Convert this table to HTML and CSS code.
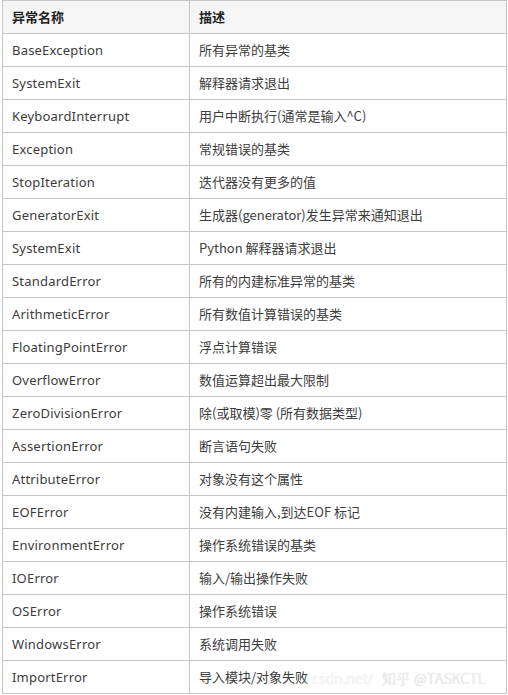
FILE: index.html
```html
<!DOCTYPE html>
<html lang="zh-CN">
<head>
<meta charset="utf-8">
<link rel="stylesheet" href="styles.css">
</head>
<body>
<div class="wrap">
<table class="err-table">
<thead>
<tr><th class="c1">异常名称</th><th class="c2">描述</th></tr>
</thead>
<tbody>
<tr><td>BaseException</td><td>所有异常的基类</td></tr>
<tr><td>SystemExit</td><td>解释器请求退出</td></tr>
<tr><td>KeyboardInterrupt</td><td>用户中断执行(通常是输入^C)</td></tr>
<tr><td>Exception</td><td>常规错误的基类</td></tr>
<tr><td>StopIteration</td><td>迭代器没有更多的值</td></tr>
<tr><td>GeneratorExit</td><td>生成器(generator)发生异常来通知退出</td></tr>
<tr><td>SystemExit</td><td>Python 解释器请求退出</td></tr>
<tr><td>StandardError</td><td>所有的内建标准异常的基类</td></tr>
<tr><td>ArithmeticError</td><td>所有数值计算错误的基类</td></tr>
<tr><td>FloatingPointError</td><td>浮点计算错误</td></tr>
<tr><td>OverflowError</td><td>数值运算超出最大限制</td></tr>
<tr><td>ZeroDivisionError</td><td>除(或取模)零 (所有数据类型)</td></tr>
<tr><td>AssertionError</td><td>断言语句失败</td></tr>
<tr><td>AttributeError</td><td>对象没有这个属性</td></tr>
<tr><td>EOFError</td><td>没有内建输入,到达EOF 标记</td></tr>
<tr><td>EnvironmentError</td><td>操作系统错误的基类</td></tr>
<tr><td>IOError</td><td>输入/输出操作失败</td></tr>
<tr><td>OSError</td><td>操作系统错误</td></tr>
<tr><td>WindowsError</td><td>系统调用失败</td></tr>
<tr><td>ImportError</td><td>导入模块/对象失败</td></tr>
</tbody>
</table>
<div class="ghost">csdn.net/</div>
<div class="watermark">知乎 @TASKCTL</div>
</div>
</body>
</html>
```
FILE: styles.css
```css
html, body {
  margin: 0;
  padding: 0;
  background: #ffffff;
}
.wrap {
  position: relative;
  padding: 0 0 0 2px;
}
.err-table {
  border-collapse: collapse;
  width: 505px;
  table-layout: fixed;
  font-family: "Noto Sans", "Noto Sans CJK SC", sans-serif;
  font-size: 13px;
  color: #3c3c3c;
}
.err-table th,
.err-table td {
  border: 1px solid #c6c6c6;
  height: 32px;
  padding: 0 0 0 9px;
  text-align: left;
  vertical-align: middle;
  white-space: nowrap;
  line-height: 16px;
}
.err-table th {
  background: #f5f5f5;
  font-family: "Noto Sans CJK SC", sans-serif;
  font-weight: 700;
  color: #222222;
}
.err-table .c1 { width: 177px; }
.err-table td:first-child {
  letter-spacing: 0.2px;
}
.err-table td:last-child {
  font-family: "Noto Sans CJK SC", sans-serif;
}
.watermark {
  position: absolute;
  left: 382px;
  top: 668px;
  font-family: "Noto Sans CJK SC", sans-serif;
  font-size: 14px;
  font-weight: 300;
  color: #f6f6f6;
  text-shadow: 0 0 1px #b0b0b0;
  letter-spacing: 0.3px;
}
.ghost {
  position: absolute;
  left: 312px;
  top: 669px;
  font-family: "Noto Sans", sans-serif;
  font-size: 14px;
  color: #f7f7f7;
  text-shadow: 0 0 1px #dddddd;
}
```
